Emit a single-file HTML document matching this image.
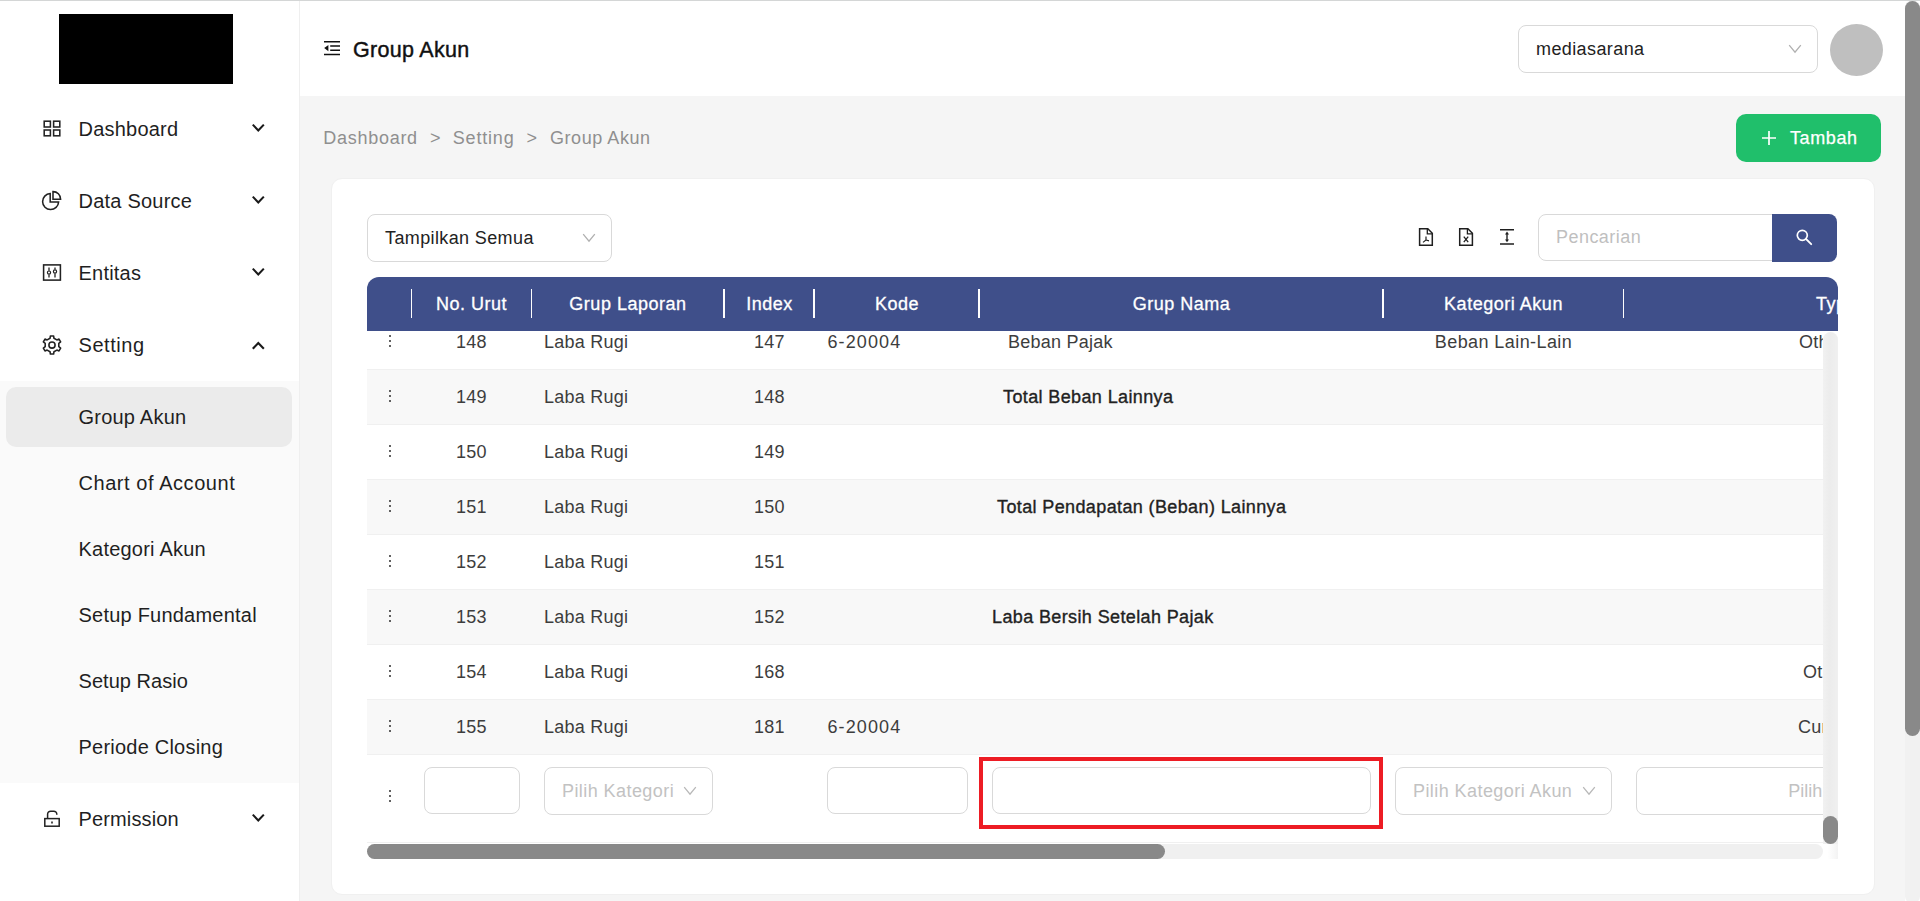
<!DOCTYPE html>
<html lang="id">
<head>
<meta charset="utf-8">
<title>Group Akun</title>
<style>
*{box-sizing:border-box;margin:0;padding:0}
html,body{width:1920px;height:901px;overflow:hidden;background:#f5f5f5;font-family:"Liberation Sans",sans-serif;color:#1f1f1f}
.abs{position:absolute}
#topline{left:0;top:0;width:1920px;height:1px;background:#d4d6d6;z-index:50}
/* sidebar */
#side{left:0;top:0;width:300px;height:901px;background:#fff;border-right:1px solid #efefef}
#logo{left:59px;top:14px;width:174px;height:70px;background:#000}
.mi{left:0;width:299px;height:40px;font-size:20px;line-height:40px;color:#1f1f1f}
.mi span{position:absolute;left:78.5px;top:0;white-space:nowrap;letter-spacing:.22px}
.mi svg{position:absolute}
#sub{left:0;top:381px;width:299px;height:402px;background:#fafafa}
#sel{left:6px;top:387px;width:286px;height:60px;background:#ebebeb;border-radius:10px}
.si{left:78.5px;font-size:20px;line-height:40px;height:40px;white-space:nowrap;color:#1f1f1f;letter-spacing:.22px}
/* header */
#head{left:300px;top:0;width:1605px;height:96px;background:#fff}
#title{left:353px;top:29.6px;font-size:21.5px;line-height:40px;letter-spacing:.3px;color:#111;-webkit-text-stroke:.42px #111;white-space:nowrap}
.sel{background:#fff;border:1px solid #d9d9d9;border-radius:8px}
/* page scrollbar */
#psb{left:1905px;top:0;width:15px;height:901px;background:#fff}
#psbk{left:1905px;top:0;width:15px;height:904px;background:#f1f1f1;border-radius:8px}
#psbt{left:1905px;top:1px;width:15px;height:735px;background:#898989;border-radius:8px}
/* breadcrumb */
.bc{top:118px;font-size:18px;line-height:40px;color:#8f8f8f;white-space:nowrap;letter-spacing:.55px}
#add{left:1736px;top:114px;width:145px;height:48px;border-radius:10px;background:#20bf6b}
#add span{position:absolute;left:54px;top:4px;line-height:40px;font-size:18px;color:#fff;letter-spacing:.6px;-webkit-text-stroke:.25px #fff}
/* card */
#card{left:330.5px;top:177.5px;width:1544px;height:717.5px;background:#fff;border-radius:11px;border:1px solid #f0f0f0}

#ent{left:1518px;top:25px;width:300px;height:48px}
#ent span{position:absolute;left:17px;top:3px;line-height:40px;font-size:18px;letter-spacing:.4px;color:#222}
#ava{left:1830px;top:24px;width:53px;height:52px;border-radius:50%;background:#bfbfbf}
#filt{left:367px;top:214px;width:245px;height:48px}
#filt span{position:absolute;left:17px;top:3px;line-height:40px;font-size:18px;letter-spacing:.38px;color:#222}
#srch{left:1538px;top:214px;width:235px;height:47px;border-radius:8px 0 0 8px}
#srch span{position:absolute;left:17px;top:1.5px;line-height:40px;font-size:18px;letter-spacing:.45px;color:#bfbfbf}
#sbtn{left:1772px;top:214px;width:65px;height:48px;border-radius:0 8px 8px 0;background:#3f4f8a}
/* table */
#th{left:367px;top:277px;width:1471px;height:54px;background:#3f4f8a;border-radius:12px 12px 0 0;overflow:hidden}
.hd{position:absolute;top:7px;line-height:40px;font-size:18px;color:#fff;text-align:center;white-space:nowrap;letter-spacing:.52px;-webkit-text-stroke:.3px #fff}
.dv{position:absolute;top:12px;height:29px;background:#fdfdfd}
#tb{left:367px;top:331px;width:1456px;height:513px;overflow:hidden;background:#fff}
.row{position:absolute;left:0;width:1456px;height:55px;border-bottom:1px solid #f0f0f0;font-size:18px;line-height:40px;color:#3d3d3d;letter-spacing:.25px}
.row.odd{background:#f8f8f8}
.row span{position:absolute;top:7px;white-space:nowrap}
.row .c{text-align:center}
.row b{font-weight:normal;letter-spacing:.38px;-webkit-text-stroke:.35px #222;color:#222}
.dots{position:absolute;left:21px;width:4px}
.dots i{position:absolute;left:.6px;width:2.3px;height:2.3px;background:#2e2e2e;border-radius:50%}
.inp{position:absolute;top:12px;height:47px;border:1px solid #d9d9d9;border-radius:8px;background:#fff}
.inp span{position:absolute;top:3px;left:17px;color:#c2c2c2;white-space:nowrap;letter-spacing:.43px}
#red{left:979px;top:757px;width:404px;height:72px;border:4px solid #ed1c24}
#vsb{left:1823px;top:332px;width:15px;height:512px;background:linear-gradient(90deg,#f1f1f1,#ececec 45%,#f0f0f0);border-radius:8px 8px 0 0}
#vcor{left:1823px;top:844px;width:15px;height:15px;background:linear-gradient(90deg,#fff 30%,#f3f3f3)}
#vsbt{left:1823px;top:816px;width:15px;height:28px;background:#898989;border-radius:8px}
#hsb{left:367px;top:844px;width:1456px;height:15px;background:#f0f0f0;border-radius:8px}
#hsbt{left:367px;top:844px;width:798px;height:15px;background:#898989;border-radius:8px}
</style>
</head>
<body>
<div id="side" class="abs">
  <div id="logo" class="abs"></div>
  <div class="mi abs" style="top:109px"><span>Dashboard</span></div>
  <svg class="abs" style="left:43px;top:120px" width="18" height="17" viewBox="0 0 18 17"><g fill="none" stroke="#222" stroke-width="1.55"><rect x="1.2" y="1.2" width="6.2" height="5.8"/><rect x="10.6" y="1.2" width="6.2" height="5.8"/><rect x="1.2" y="10" width="6.2" height="5.8"/><rect x="10.6" y="10" width="6.2" height="5.8"/></g></svg><svg class="abs" style="left:251px;top:123px" width="15" height="11" viewBox="0 0 15 11"><path d="M2.5 2.4 L7.3 7.4 L12.1 2.4" fill="none" stroke="#1a1a1a" stroke-width="2.1" stroke-linecap="square" stroke-linejoin="miter"/></svg>
  <div class="mi abs" style="top:181px"><span>Data Source</span></div>
  <svg class="abs" style="left:41px;top:190px" width="22" height="21" viewBox="0 0 22 21"><g fill="none" stroke="#222" stroke-width="1.55"><path d="M9.2 3.6 A8 8 0 1 0 17.6 12 L9.2 12 Z"/><path d="M12 1.6 A7.6 7.6 0 0 1 19.6 9.2 L12 9.2 Z"/></g></svg><svg class="abs" style="left:251px;top:195px" width="15" height="11" viewBox="0 0 15 11"><path d="M2.5 2.4 L7.3 7.4 L12.1 2.4" fill="none" stroke="#1a1a1a" stroke-width="2.1" stroke-linecap="square" stroke-linejoin="miter"/></svg>
  <div class="mi abs" style="top:253px"><span>Entitas</span></div>
  <svg class="abs" style="left:42px;top:263px" width="20" height="19" viewBox="0 0 20 19"><g fill="none" stroke="#222" stroke-width="1.55"><rect x="1.6" y="1.9" width="16.8" height="15.2"/><path d="M7 4.6V7.8M7 11.4V14.4M13 4.6V6.6M13 10.4V14.4" stroke-width="1.3"/><circle cx="7" cy="9.6" r="1.6" stroke-width="1.2"/><circle cx="13" cy="8.5" r="1.6" stroke-width="1.2"/></g></svg><svg class="abs" style="left:251px;top:267px" width="15" height="11" viewBox="0 0 15 11"><path d="M2.5 2.4 L7.3 7.4 L12.1 2.4" fill="none" stroke="#1a1a1a" stroke-width="2.1" stroke-linecap="square" stroke-linejoin="miter"/></svg>
  <div class="mi abs" style="top:325px"><span style="letter-spacing:.55px">Setting</span></div>
  <svg class="abs" style="left:42px;top:334.5px" width="20" height="20" viewBox="0 0 20 20"><g fill="none" stroke="#222" stroke-width="1.55" stroke-linejoin="round"><path d="M8.05 3.28 L8.37 0.95 L11.63 0.95 L11.95 3.28 L14.85 4.95 L17.03 4.06 L18.66 6.88 L16.80 8.33 L16.80 11.67 L18.66 13.12 L17.03 15.94 L14.85 15.05 L11.95 16.72 L11.63 19.05 L8.37 19.05 L8.05 16.72 L5.15 15.05 L2.97 15.94 L1.34 13.12 L3.20 11.67 L3.20 8.33 L1.34 6.88 L2.97 4.06 L5.15 4.95 Z"/><circle cx="10" cy="10" r="3.1"/></g></svg><svg class="abs" style="left:251px;top:340px" width="15" height="11" viewBox="0 0 15 11"><path d="M2.5 8 L7.3 3 L12.1 8" fill="none" stroke="#1a1a1a" stroke-width="2.1" stroke-linecap="square" stroke-linejoin="miter"/></svg>
  <div id="sub" class="abs"></div>
  <div id="sel" class="abs"></div>
  <div class="si abs" style="top:397px">Group Akun</div>
  <div class="si abs" style="top:463px;letter-spacing:.56px">Chart of Account</div>
  <div class="si abs" style="top:529px">Kategori Akun</div>
  <div class="si abs" style="top:595px">Setup Fundamental</div>
  <div class="si abs" style="top:661px;letter-spacing:.05px">Setup Rasio</div>
  <div class="si abs" style="top:727px">Periode Closing</div>
  <div class="mi abs" style="top:799px"><span style="letter-spacing:.13px">Permission</span></div>
  <svg class="abs" style="left:43px;top:809px" width="18" height="19" viewBox="0 0 18 19"><g fill="none" stroke="#222" stroke-width="1.5"><rect x="1.8" y="9.6" width="14.4" height="7.6"/><path d="M4.6 9.6V5.2a3 3 0 0 1 3-3h3.2a3 3 0 0 1 3 3v0.6"/><path d="M9 12.4v2" stroke-width="1.6"/></g></svg><svg class="abs" style="left:251px;top:813px" width="15" height="11" viewBox="0 0 15 11"><path d="M2.5 2.4 L7.3 7.4 L12.1 2.4" fill="none" stroke="#1a1a1a" stroke-width="2.1" stroke-linecap="square" stroke-linejoin="miter"/></svg>
</div>
<div id="head" class="abs"></div>
<div id="title" class="abs">Group Akun</div>
<div id="topline" class="abs"></div>
<div id="psb" class="abs"></div><div id="psbk" class="abs"></div><div id="psbt" class="abs"></div>
<div class="bc abs" style="left:323.3px;letter-spacing:.72px">Dashboard</div>
<div class="bc abs" style="left:430px">&gt;</div>
<div class="bc abs" style="left:452.8px;letter-spacing:.8px">Setting</div>
<div class="bc abs" style="left:526.5px">&gt;</div>
<div class="bc abs" style="left:550px">Group Akun</div>
<div id="add" class="abs"><span>Tambah</span></div>
<div id="card" class="abs"></div>
<div id="ent" class="abs sel"><span>mediasarana</span><svg class="abs" style="left:269px;top:18px" width="14" height="10" viewBox="0 0 14 10"><path d="M1.2 1.2 L7 8.2 L12.8 1.2" fill="none" stroke="#b0b0b0" stroke-width="1.3"/></svg></div>
<div id="ava" class="abs"></div>
<div id="filt" class="abs sel"><span>Tampilkan Semua</span><svg class="abs" style="left:214px;top:18px" width="14" height="10" viewBox="0 0 14 10"><path d="M1.2 1.2 L7 8.2 L12.8 1.2" fill="none" stroke="#b0b0b0" stroke-width="1.3"/></svg></div>
<div id="srch" class="abs sel"><span>Pencarian</span></div>
<div id="sbtn" class="abs"><svg class="abs" style="left:23px;top:14px" width="19" height="19" viewBox="0 0 19 19"><circle cx="7.3" cy="7.3" r="5" fill="none" stroke="#fff" stroke-width="1.7"/><path d="M11.2 11.2 L16.2 16.2" stroke="#fff" stroke-width="1.9" stroke-linecap="round"/></svg></div>
<div id="th" class="abs">
 <div class="dv" style="left:44px;width:1px"></div>
 <div class="dv" style="left:164px;width:1px"></div>
 <div class="dv" style="left:356px;width:2px"></div>
 <div class="dv" style="left:446px;width:2px"></div>
 <div class="dv" style="left:611px;width:2px"></div>
 <div class="dv" style="left:1015px;width:2px"></div>
 <div class="dv" style="left:1255.5px;width:1.5px"></div>
 <div class="hd" style="left:45px;width:119px">No. Urut</div>
 <div class="hd" style="left:165px;width:192px">Grup Laporan</div>
 <div class="hd" style="left:358px;width:89px">Index</div>
 <div class="hd" style="left:448px;width:164px">Kode</div>
 <div class="hd" style="left:613px;width:403px">Grup Nama</div>
 <div class="hd" style="left:1017px;width:239px">Kategori Akun</div>
 <div class="hd" style="left:1449px;text-align:left">Type</div>
</div>
<div id="tb" class="abs">
<div class="row" style="top:-16px"><div class="dots" style="top:20px"><i style="top:0"></i><i style="top:5px"></i><i style="top:10px"></i></div><span class="c" style="left:45px;width:119px">148</span><span style="left:177px">Laba Rugi</span><span class="c" style="left:358px;width:89px">147</span><span style="left:460.5px;letter-spacing:1.1px">6-20004</span><span style="left:641px">Beban Pajak</span><span class="c" style="left:1017px;width:239px;letter-spacing:.42px">Beban Lain-Lain</span><span style="left:1432px">Other Expense</span></div>
<div class="row odd" style="top:39px"><div class="dots" style="top:20px"><i style="top:0"></i><i style="top:5px"></i><i style="top:10px"></i></div><span class="c" style="left:45px;width:119px">149</span><span style="left:177px">Laba Rugi</span><span class="c" style="left:358px;width:89px">148</span><span style="left:636px"><b>Total Beban Lainnya</b></span></div>
<div class="row" style="top:94px"><div class="dots" style="top:20px"><i style="top:0"></i><i style="top:5px"></i><i style="top:10px"></i></div><span class="c" style="left:45px;width:119px">150</span><span style="left:177px">Laba Rugi</span><span class="c" style="left:358px;width:89px">149</span></div>
<div class="row odd" style="top:149px"><div class="dots" style="top:20px"><i style="top:0"></i><i style="top:5px"></i><i style="top:10px"></i></div><span class="c" style="left:45px;width:119px">151</span><span style="left:177px">Laba Rugi</span><span class="c" style="left:358px;width:89px">150</span><span style="left:630px"><b>Total Pendapatan (Beban) Lainnya</b></span></div>
<div class="row" style="top:204px"><div class="dots" style="top:20px"><i style="top:0"></i><i style="top:5px"></i><i style="top:10px"></i></div><span class="c" style="left:45px;width:119px">152</span><span style="left:177px">Laba Rugi</span><span class="c" style="left:358px;width:89px">151</span></div>
<div class="row odd" style="top:259px"><div class="dots" style="top:20px"><i style="top:0"></i><i style="top:5px"></i><i style="top:10px"></i></div><span class="c" style="left:45px;width:119px">153</span><span style="left:177px">Laba Rugi</span><span class="c" style="left:358px;width:89px">152</span><span style="left:625px"><b>Laba Bersih Setelah Pajak</b></span></div>
<div class="row" style="top:314px"><div class="dots" style="top:20px"><i style="top:0"></i><i style="top:5px"></i><i style="top:10px"></i></div><span class="c" style="left:45px;width:119px">154</span><span style="left:177px">Laba Rugi</span><span class="c" style="left:358px;width:89px">168</span><span style="left:1436px">Other Comprehensive</span></div>
<div class="row odd" style="top:369px"><div class="dots" style="top:20px"><i style="top:0"></i><i style="top:5px"></i><i style="top:10px"></i></div><span class="c" style="left:45px;width:119px">155</span><span style="left:177px">Laba Rugi</span><span class="c" style="left:358px;width:89px">181</span><span style="left:460.5px;letter-spacing:1.1px">6-20004</span><span style="left:1431px">Current Earning</span></div>
<div class="row" style="top:424px;height:88px">
<div class="dots" style="top:35px"><i style="top:0"></i><i style="top:5px"></i><i style="top:10px"></i></div>
<div class="inp" style="left:57px;width:96px"></div>
<div class="inp" style="left:177px;width:169px;height:48px"><span>Pilih Kategori</span><svg class="abs" style="left:138px;top:18px" width="14" height="10" viewBox="0 0 14 10"><path d="M1.2 1.2 L7 8.2 L12.8 1.2" fill="none" stroke="#b8b8b8" stroke-width="1.3"/></svg></div>
<div class="inp" style="left:460px;width:141px"></div>
<div class="inp" style="left:625px;width:379px"></div>
<div class="inp" style="left:1028px;width:217px;height:48px"><span>Pilih Kategori Akun</span><svg class="abs" style="left:186px;top:18px" width="14" height="10" viewBox="0 0 14 10"><path d="M1.2 1.2 L7 8.2 L12.8 1.2" fill="none" stroke="#b8b8b8" stroke-width="1.3"/></svg></div>
<div class="inp" style="left:1269px;width:400px;height:48px"><span style="left:151.3px;letter-spacing:0">Pilih Type</span></div>
</div>
</div>

<svg class="abs" style="left:323px;top:40px" width="18" height="16" viewBox="0 0 18 16"><g stroke="#111" stroke-width="1.5" fill="none"><path d="M1 1.8H17M7.2 6.1H17M7.2 10.2H17M1 14.5H17"/></g><path d="M1.2 8.1 L5.4 5 V11.2 Z" fill="#111"/></svg>
<svg class="abs" style="left:1761px;top:130px" width="16" height="16" viewBox="0 0 16 16"><path d="M8 1V15M1 8H15" stroke="#fff" stroke-width="1.7" fill="none"/></svg>
<svg class="abs" style="left:1418px;top:227px" width="16" height="20" viewBox="0 0 16 20"><g fill="none" stroke="#1f1f1f" stroke-width="1.5" stroke-linejoin="miter"><path d="M1.6 1.7H9.8L14.3 6.2V18.3H1.6Z"/><path d="M9.3 2V6.8H14" stroke-width="1.3"/><path d="M8 9.6V13L5 15.4M8 13L11 13.8" stroke-width="1.2"/></g></svg>
<svg class="abs" style="left:1458px;top:227px" width="16" height="20" viewBox="0 0 16 20"><g fill="none" stroke="#1f1f1f" stroke-width="1.5" stroke-linejoin="miter"><path d="M1.7 1.7H9.9L14.4 6.2V18.3H1.7Z"/><path d="M9.4 2V6.8H14.1" stroke-width="1.3"/><path d="M5.8 9.6L10.2 15.2M10.2 9.6L5.8 15.2" stroke-width="1.3"/></g></svg>
<svg class="abs" style="left:1499px;top:228px" width="16" height="18" viewBox="0 0 16 18"><g fill="none" stroke="#1f1f1f" stroke-width="1.6"><path d="M1 1.7H15M1 16H15"/><path d="M8 5V13" stroke-width="1.4"/></g><path d="M8 3.6L10 6.4H6ZM8 14.2L10 11.4H6Z" fill="#1f1f1f"/></svg>
<div id="red" class="abs"></div>
<div id="vsb" class="abs"></div><div id="vcor" class="abs"></div><div id="vsbt" class="abs"></div>
<div id="hsb" class="abs"></div><div id="hsbt" class="abs"></div>

</body>
</html>
